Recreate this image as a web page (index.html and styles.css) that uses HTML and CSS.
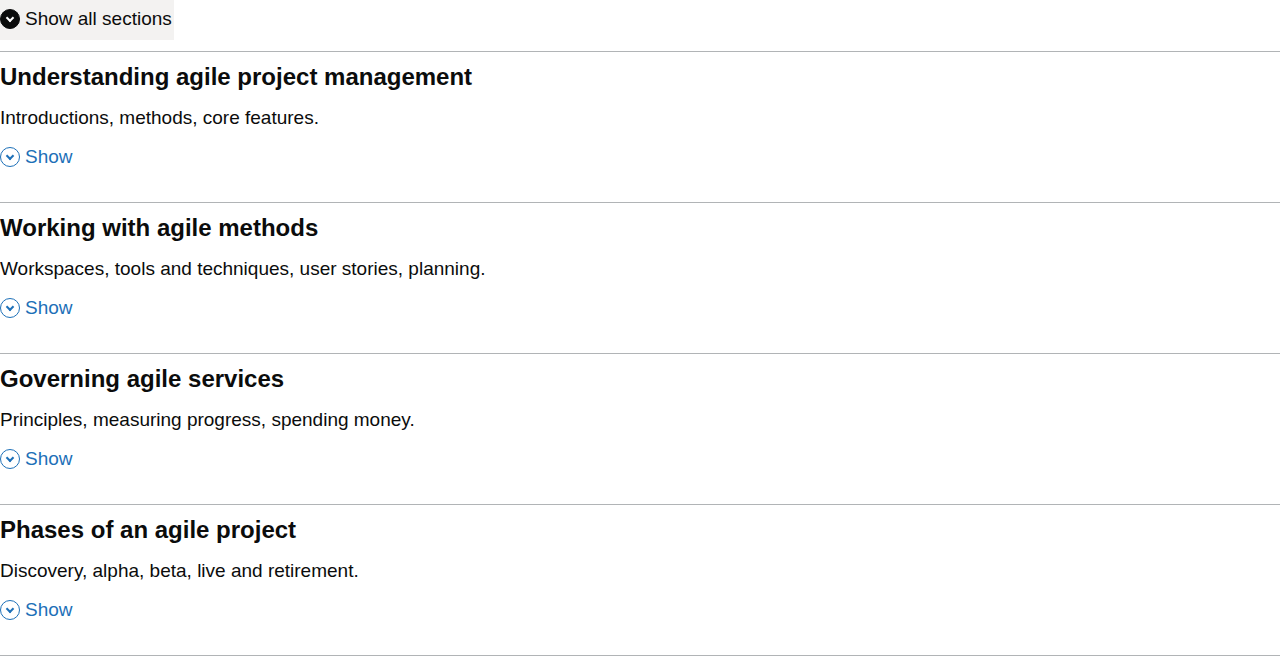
FILE: index.html
```html
<!DOCTYPE html>
<html lang="en">
<head>
<meta charset="utf-8">
<title>Agile delivery</title>
<link rel="stylesheet" href="styles.css">
</head>
<body>
<div class="accordion">
  <div class="accordion-controls">
    <button type="button" class="show-all" aria-expanded="false"><span class="chevron"></span><span>Show all sections</span></button>
  </div>
  <section class="section">
    <h2 class="section-heading"><button type="button" class="section-button" aria-expanded="false">
      <span class="section-title">Understanding agile project management</span>
      <span class="section-summary">Introductions, methods, core features.</span>
      <span class="section-toggle"><span class="chevron"></span><span>Show</span></span>
    </button></h2>
  </section>
  <section class="section">
    <h2 class="section-heading"><button type="button" class="section-button" aria-expanded="false">
      <span class="section-title">Working with agile methods</span>
      <span class="section-summary">Workspaces, tools and techniques, user stories, planning.</span>
      <span class="section-toggle"><span class="chevron"></span><span>Show</span></span>
    </button></h2>
  </section>
  <section class="section">
    <h2 class="section-heading"><button type="button" class="section-button" aria-expanded="false">
      <span class="section-title">Governing agile services</span>
      <span class="section-summary">Principles, measuring progress, spending money.</span>
      <span class="section-toggle"><span class="chevron"></span><span>Show</span></span>
    </button></h2>
  </section>
  <section class="section">
    <h2 class="section-heading"><button type="button" class="section-button" aria-expanded="false">
      <span class="section-title">Phases of an agile project</span>
      <span class="section-summary">Discovery, alpha, beta, live and retirement.</span>
      <span class="section-toggle"><span class="chevron"></span><span>Show</span></span>
    </button></h2>
  </section>
</div>
</body>
</html>
```

FILE: styles.css
```css
body {
  margin: 0;
  color: #0b0c0c;
  background: #ffffff;
  font-family: "Liberation Sans", Arial, sans-serif;
  font-size: 19px;
}

.accordion {
  border-bottom: 1px solid #b1b4b6;
}

.accordion-controls {
  padding-bottom: 11px;
}

.show-all,
.section-button {
  margin: 0;
  border: 0;
  background: none;
  color: inherit;
  font: inherit;
  cursor: pointer;
}

.show-all {
  display: flex;
  align-items: center;
  gap: 5px;
  padding: 5px 2px 7px 0;
  line-height: 28px;
  background: #f3f2f1;
}

.section {
  border-top: 1px solid #b1b4b6;
}

.section-heading {
  margin: 0;
  font: inherit;
}

.section-button {
  display: flex;
  flex-direction: column;
  align-items: flex-start;
  width: 100%;
  padding: 10px 0 31px;
  text-align: left;
}

.section-title {
  padding-bottom: 13px;
  font-size: 24px;
  font-weight: bold;
  line-height: 30px;
}

.section-summary {
  padding-bottom: 13px;
  line-height: 25px;
}

.section-toggle {
  display: flex;
  align-items: center;
  gap: 5px;
  color: #1d70b8;
  line-height: 28px;
}

.chevron {
  display: flex;
  align-items: center;
  justify-content: center;
  box-sizing: border-box;
  width: 20px;
  height: 20px;
  border: 1px solid currentColor;
  border-radius: 50%;
}

.chevron::after {
  content: "";
  box-sizing: border-box;
  width: 6px;
  height: 6px;
  margin-bottom: 2px;
  border-right: 2px solid currentColor;
  border-bottom: 2px solid currentColor;
  transform: rotate(45deg);
}

.show-all .chevron {
  background: #0b0c0c;
}

.show-all .chevron::after {
  border-color: #ffffff;
}
```
